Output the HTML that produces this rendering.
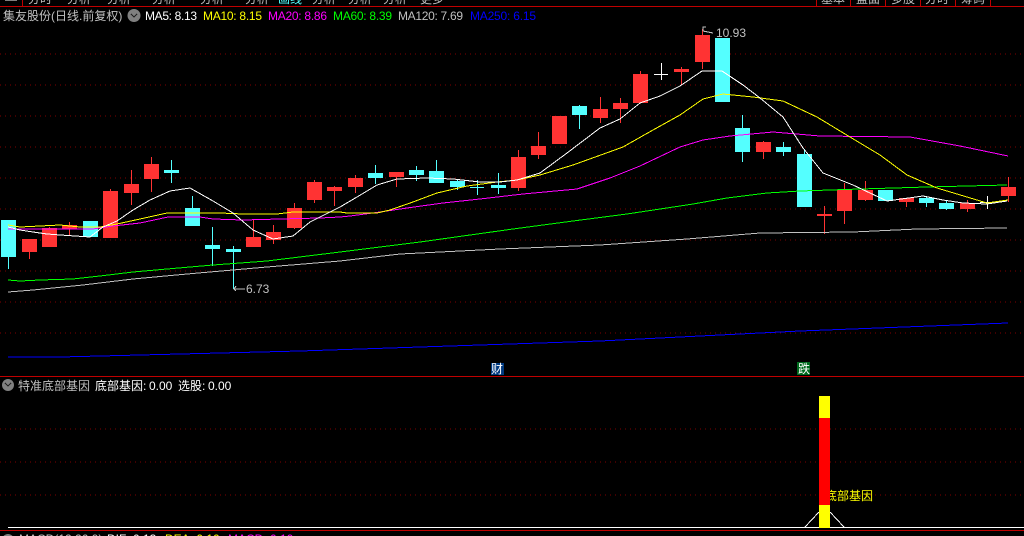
<!DOCTYPE html>
<html><head><meta charset="utf-8"><style>
html,body{margin:0;padding:0;background:#000;width:1024px;height:536px;overflow:hidden}
svg{position:absolute;left:0;top:0}
text{font-family:"WenQuanYi Zen Hei","Liberation Sans","Noto Sans CJK SC",sans-serif;font-size:12px}
.n{font-family:"Liberation Sans","WenQuanYi Zen Hei",sans-serif}
.g line{stroke:#800000;stroke-dasharray:1 4;stroke-width:1}
polyline{fill:none;stroke-width:1}
</style></head><body>
<svg width="1024" height="536" viewBox="0 0 1024 536" shape-rendering="crispEdges">
<g fill="#c0c0c0">
<text x="28" y="3">分时</text><text x="67" y="3">分析</text><text x="107" y="3">分析</text><text x="152" y="3">分析</text><text x="200" y="3">分析</text><text x="245" y="3">分析</text>
<text x="278" y="3" fill="#54ffff">画线</text><text x="312" y="3">分析</text><text x="348" y="3">分析</text><text x="383" y="3">分析</text><text x="420" y="3">更多</text>
<text x="821" y="3">基本</text><text x="856" y="3">盘面</text><text x="891" y="3">多股</text><text x="925" y="3">分时</text><text x="961" y="3">筹码</text>
</g>
<rect x="5" y="0" width="12" height="1" fill="#808080"/>
<rect x="0" y="6" width="1024" height="1" fill="#c00000"/>
<rect x="22" y="0" width="1" height="6" fill="#c00000"/><rect x="816" y="0" width="1" height="6" fill="#c00000"/><rect x="850" y="0" width="1" height="6" fill="#c00000"/><rect x="885" y="0" width="1" height="6" fill="#c00000"/><rect x="920" y="0" width="1" height="6" fill="#c00000"/><rect x="955" y="0" width="1" height="6" fill="#c00000"/><rect x="990" y="0" width="1" height="6" fill="#c00000"/>

<g class="g">
<line x1="0" x2="1024" y1="54" y2="54"/><line x1="0" x2="1024" y1="85" y2="85"/><line x1="0" x2="1024" y1="116" y2="116"/><line x1="0" x2="1024" y1="147" y2="147"/><line x1="0" x2="1024" y1="178" y2="178"/><line x1="0" x2="1024" y1="209" y2="209"/><line x1="0" x2="1024" y1="240" y2="240"/><line x1="0" x2="1024" y1="271" y2="271"/><line x1="0" x2="1024" y1="302" y2="302"/><line x1="0" x2="1024" y1="333" y2="333"/>
<line x1="0" x2="1024" y1="429" y2="429"/><line x1="0" x2="1024" y1="462" y2="462"/><line x1="0" x2="1024" y1="495" y2="495"/>
</g>

<path fill="#ff3333" d="M22 239h15v13h-15zM29 252h1v7h-1zM42 228h15v19h-15zM49 227h1v1h-1zM62 225h15v4h-15zM69 222h1v13h-1zM103 191h15v47h-15zM110 189h1v2h-1zM124 184h15v9h-15zM131 170h1v35h-1zM144 164h15v15h-15zM151 157h1v35h-1zM246 237h15v10h-15zM253 219h1v18h-1zM266 232h15v8h-15zM273 225h1v19h-1zM287 208h15v20h-15zM294 203h1v26h-1zM307 182h15v18h-15zM314 180h1v23h-1zM327 187h15v4h-15zM334 186h1v20h-1zM348 178h15v9h-15zM355 175h1v18h-1zM389 172h15v5h-15zM396 177h1v10h-1zM511 157h15v31h-15zM518 150h1v41h-1zM531 146h15v9h-15zM538 132h1v27h-1zM552 116h15v28h-15zM593 109h15v9h-15zM600 97h1v26h-1zM613 103h15v6h-15zM620 98h1v25h-1zM633 74h15v29h-15zM640 71h1v3h-1zM674 69h15v3h-15zM681 67h1v18h-1zM695 35h15v27h-15zM702 29h1v40h-1zM756 142h15v10h-15zM763 141h1v18h-1zM817 214h15v2h-15zM824 206h1v28h-1zM837 190h15v21h-15zM844 183h1v41h-1zM858 190h15v10h-15zM865 181h1v20h-1zM899 198h15v4h-15zM906 202h1v5h-1zM960 203h15v6h-15zM967 200h1v12h-1zM1001 187h15v9h-15zM1008 177h1v25h-1z"/>
<path fill="#54ffff" d="M1 220h15v37h-15zM8 257h1v12h-1zM83 221h15v16h-15zM164 170h15v3h-15zM171 160h1v23h-1zM185 208h15v18h-15zM192 196h1v12h-1zM205 245h15v4h-15zM212 227h1v39h-1zM226 249h15v3h-15zM233 246h1v43h-1zM368 173h15v5h-15zM375 165h1v19h-1zM409 170h15v5h-15zM416 166h1v15h-1zM429 171h15v12h-15zM436 160h1v11h-1zM450 181h15v6h-15zM457 179h1v11h-1zM470 187h14v1h-14zM477 180h1v15h-1zM491 185h15v3h-15zM498 173h1v21h-1zM572 106h15v9h-15zM579 105h1v24h-1zM715 38h15v64h-15zM735 128h15v24h-15zM742 115h1v47h-1zM776 147h15v5h-15zM783 142h1v14h-1zM797 154h15v53h-15zM804 149h1v5h-1zM878 190h15v11h-15zM919 198h15v5h-15zM926 197h1v10h-1zM939 203h15v6h-15zM946 200h1v10h-1z"/>
<path fill="#fff" d="M654 74h14v1h-14zM661 63h1v17h-1zM980 202h14v1h-14zM987 196h1v13h-1z"/>

<polyline stroke="#0000ff" points="8,357 60,357 100,356 140,355 300,351 450,346 600,341 800,331 1008,323"/>
<polyline stroke="#c0c0c0" points="8,292 33,290 83,285 133,279 187,274 267,267 340,261 400,254 500,249 600,245 687,239 760,233 853,232 917,229 1007,228"/>
<polyline stroke="#00ff00" points="8,280 20,281 40,280 73,279 100,276 133,272 167,269 213,265 267,261 340,252 420,242 513,229 573,221 627,214 680,206 693,204 727,198 767,193 800,191 860,189 927,187 1007,185"/>
<polyline stroke="#ff00ff" points="8,229 80,229 93,229 113,226 140,223 168,217 200,217 213,219 243,220 280,219 320,218 340,217 350,216 380,212 407,208 443,203 480,199 523,194 577,189 610,178 640,166 680,147 703,140 730,136 773,132 820,136 910,137 960,146 1008,156"/>
<polyline stroke="#ffff00" points="8,225 20,227 60,225 80,227 100,227 117,224 140,219 167,213 220,213 243,214 277,214 293,212 340,212 347,213 377,213 390,210 413,202 437,193 467,186 497,182 517,180 540,175 573,165 623,147 653,130 680,115 703,99 723,94 753,97 783,101 817,117 850,137 880,155 907,175 937,188 987,203 1008,200"/>
<polyline stroke="#ffffff" points="8,227 20,230 33,232 47,234 60,235 75,236 90,237 103,227 117,221 133,210 150,200 170,191 190,188 213,201 233,213 253,230 273,239 293,236 310,222 340,207 357,197 377,185 397,179 427,178 453,179 480,182 500,182 517,180 540,173 567,153 600,128 620,119 640,103 660,96 680,86 702,71 722,71 743,85 760,98 783,117 803,148 823,173 853,185 887,201 923,196 943,200 963,203 987,204 1007,201"/>

<polyline stroke="#c0c0c0" points="234,289 245,289"/><polyline stroke="#c0c0c0" points="236,286 234,289 236,291"/>
<text class="n" x="246" y="293" fill="#c0c0c0">6.73</text>
<polyline stroke="#c0c0c0" points="703,31 713,33"/><polyline stroke="#c0c0c0" points="706,27 703,27 703,31"/>
<text class="n" x="716" y="37" fill="#c0c0c0">10.93</text>

<text x="3" y="20" fill="#c0c0c0">集友股份(日线.前复权)</text>
<circle cx="134" cy="15.5" r="6.5" fill="#808080" shape-rendering="auto"/><polyline stroke="#222" points="131,14 134,17 137,14"/>
<text class="n" x="145" y="20" fill="#fff" textLength="52">MA5: 8.13</text>
<text class="n" x="203" y="20" fill="#ffff00" textLength="59">MA10: 8.15</text>
<text class="n" x="268" y="20" fill="#ff00ff" textLength="59">MA20: 8.86</text>
<text class="n" x="333" y="20" fill="#00ff00" textLength="59">MA60: 8.39</text>
<text class="n" x="398" y="20" fill="#c0c0c0" textLength="65">MA120: 7.69</text>
<text class="n" x="470" y="20" fill="#0000ff" textLength="66">MA250: 6.15</text>

<rect x="491" y="363" width="13" height="12" fill="#00397f"/>
<text x="491" y="373" fill="#fff">财</text>
<rect x="797" y="362" width="13" height="13" fill="#006a1e"/>
<text x="798" y="373" fill="#fff">跌</text>

<rect x="0" y="376" width="1024" height="1" fill="#c00000"/>
<circle cx="8" cy="385" r="6" fill="#808080" shape-rendering="auto"/><polyline stroke="#222" points="5,383 8,386 11,383"/>
<text x="18" y="390" fill="#c0c0c0">特准底部基因</text>
<text x="95" y="390" fill="#fff">底部基因:</text><text class="n" x="149" y="390" fill="#fff">0.00</text>
<text x="178" y="390" fill="#fff">选股:</text><text class="n" x="208" y="390" fill="#fff">0.00</text>

<text x="825" y="500" fill="#ffff00">底部基因</text>
<rect x="8" y="527" width="1016" height="1" fill="#fff"/>
<polyline stroke="#fff" points="805,527 819,512"/><polyline stroke="#fff" points="830,512 844,527"/>
<rect x="819" y="396" width="11" height="22" fill="#ffff00"/>
<rect x="819" y="418" width="11" height="87" fill="#ff0000"/>
<rect x="819" y="505" width="11" height="23" fill="#ffff00"/>
<rect x="0" y="530" width="1024" height="1" fill="#c00000"/>

<circle cx="8" cy="540" r="6" fill="#808080" shape-rendering="auto"/>
<text class="n" x="19" y="543" fill="#c0c0c0">MACD(12,26,9)</text>
<text class="n" x="107" y="543" fill="#fff">DIF: 0.13</text>
<text class="n" x="165" y="543" fill="#ffff00">DEA: 0.10</text>
<text class="n" x="228" y="543" fill="#ff00ff">MACD: 0.10</text>
</svg>
</body></html>
